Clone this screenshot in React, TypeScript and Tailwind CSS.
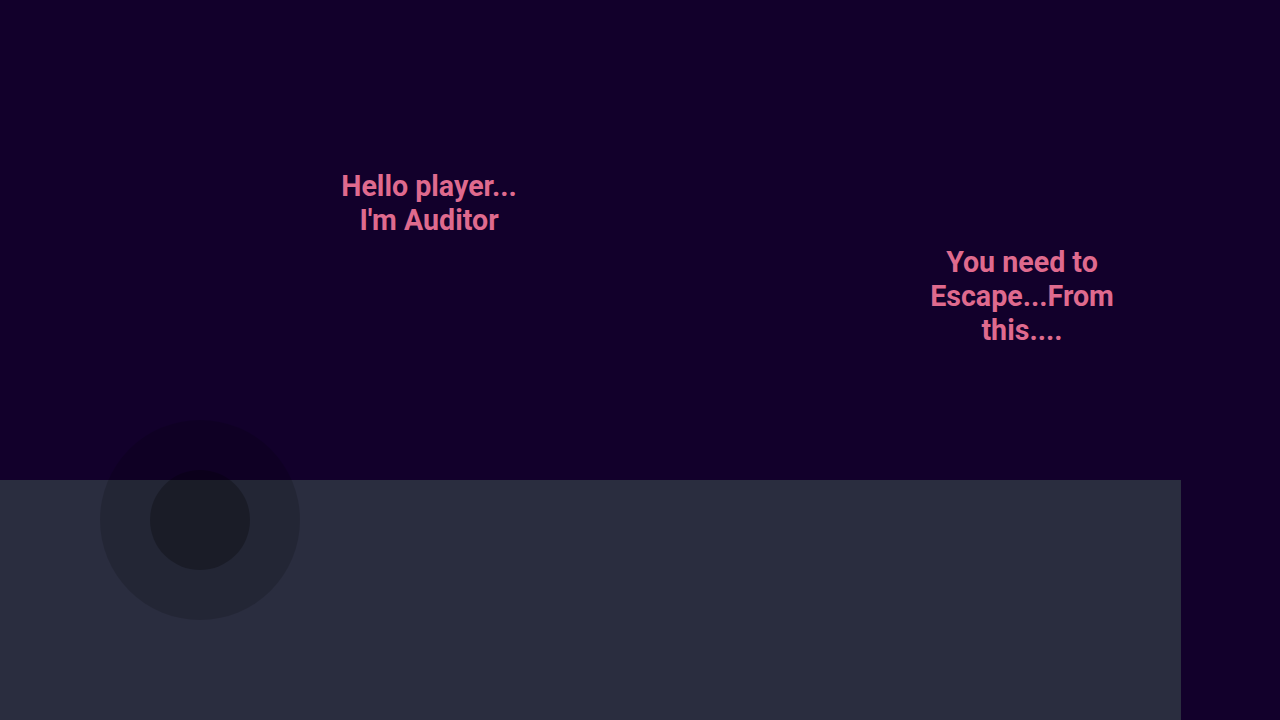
export default function App() {
  return (
    <div className="relative w-[1280px] h-[720px] overflow-hidden bg-[#12002b]" style={{ fontFamily: "Roboto, sans-serif" }}>
      <div className="absolute left-0 top-[480px] w-[1181px] h-[240px] bg-[#2a2d3f]" />
      <div className="absolute left-[319px] top-[169px] w-[220px] text-center text-[28.6px] leading-[34px] font-bold text-[#df6a8e]">
        Hello player...<br />I'm Auditor
      </div>
      <div className="absolute left-[922px] top-[245px] w-[200px] text-center text-[28.6px] leading-[34px] font-bold text-[#df6a8e]">
        You need to Escape...From this....
      </div>
      <div className="absolute left-[100px] top-[420px] w-[200px] h-[200px] rounded-full bg-black/15 flex items-center justify-center">
        <div className="w-[100px] h-[100px] rounded-full bg-black/25" />
      </div>
    </div>
  );
}
